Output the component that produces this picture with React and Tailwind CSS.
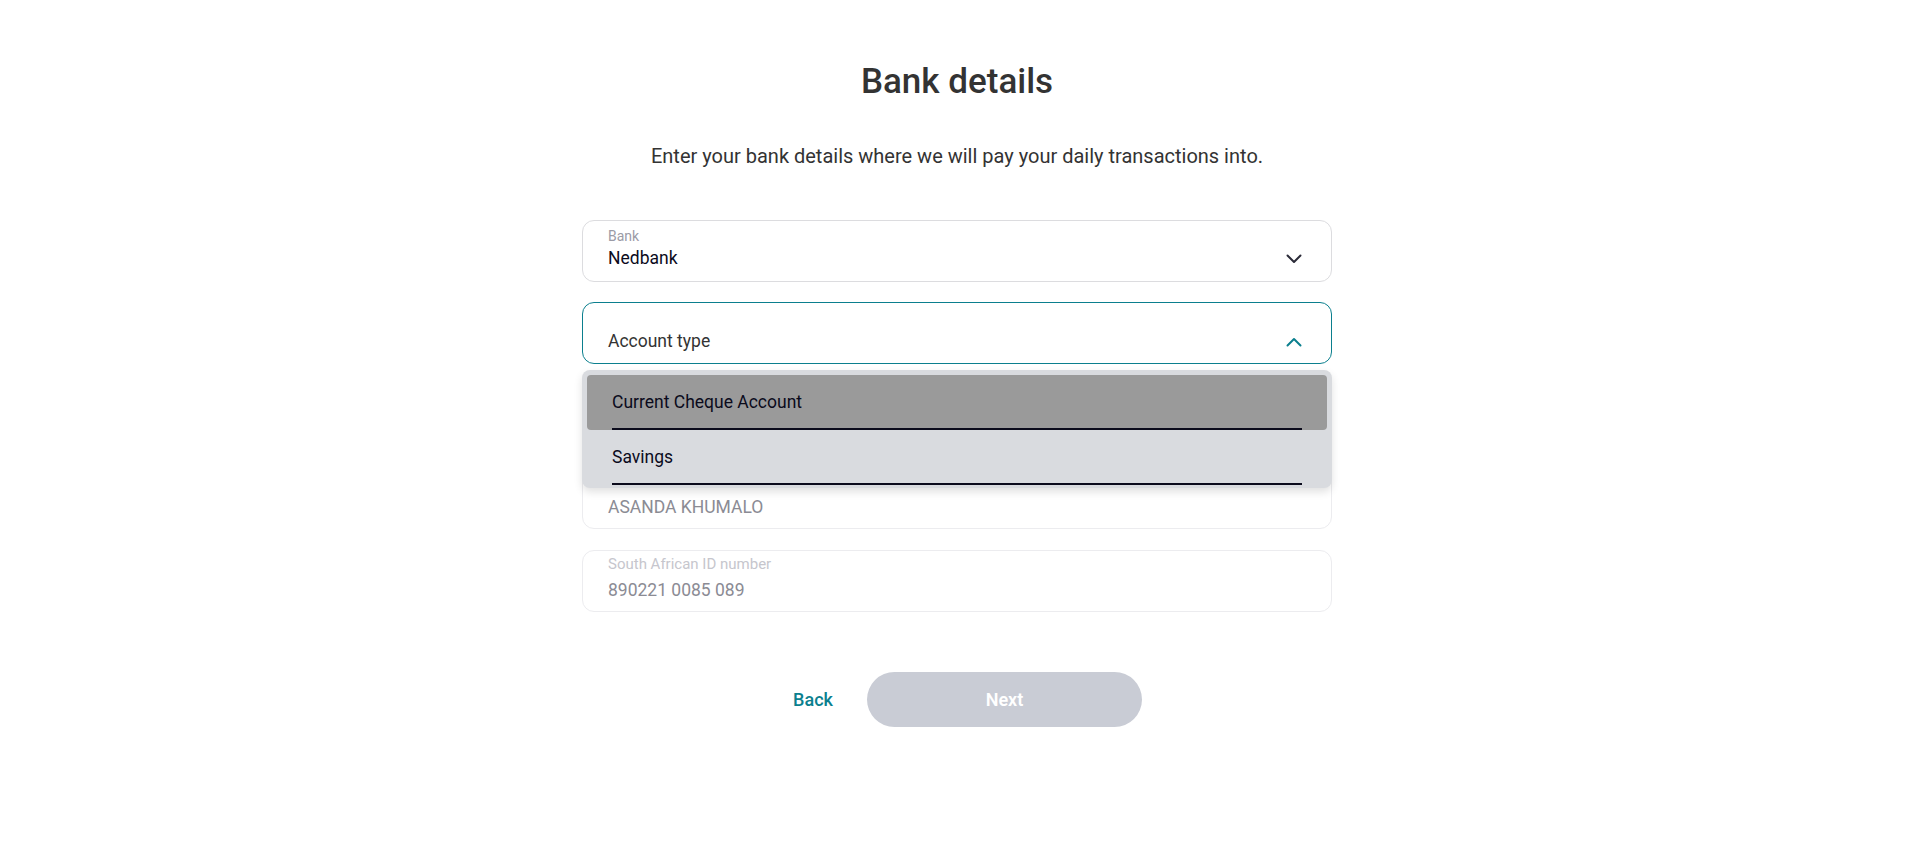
const TEAL = '#0b7f8e'

function Chevron({ up, color }) {
  return (
    <svg width="16" height="10" viewBox="0 0 16 10" fill="none" className="shrink-0">
      <polyline
        points={up ? '1.5,8.5 8,2 14.5,8.5' : '1.5,1.5 8,8 14.5,1.5'}
        stroke={color}
        strokeWidth="2"
        strokeLinecap="round"
        strokeLinejoin="round"
      />
    </svg>
  )
}

function SelectField({ label, value, placeholder, open, children }) {
  return (
    <div className="relative">
      <div
        className={
          'flex h-[62px] items-start justify-between rounded-xl border bg-white pl-[25px] pr-[29px] pt-[7px] ' +
          (open ? 'border-[#0b7f8e]' : 'border-[#dcdcdf]')
        }
      >
        <div className="flex flex-col gap-[3px]">
          <span className="h-[16px] text-[14px] leading-[16px] text-[#9b9ba6]">{label || '\u00a0'}</span>
          {value ? (
            <span className="text-[17.5px] leading-[22px] text-[#0b0b1c]">{value}</span>
          ) : (
            <span className="pt-[1px] text-[17.5px] leading-[22px] text-[#333333]">{placeholder}</span>
          )}
        </div>
        <div className={open ? 'mt-[27px]' : 'mt-[26px]'}>
          <Chevron up={open} color={open ? TEAL : '#2b2b38'} />
        </div>
      </div>
      {children}
    </div>
  )
}

function TextField({ label, value }) {
  return (
    <div className="flex h-[62px] flex-col gap-[7px] rounded-xl border border-[#ececef] bg-white pl-[25px] pt-[5px]">
      <span className="h-[16px] text-[15px] leading-[16px] text-[#c6c6cd]">{label}</span>
      <span className="text-[17.5px] leading-[22px] text-[#8b8b94]">{value}</span>
    </div>
  )
}

function Option({ text, active }) {
  return (
    <div className={'h-[55px] rounded-[4px] ' + (active ? 'bg-[#9a9a9a]' : '')}>
      <div className="mx-[25px] h-full border-b-2 border-[#0b0b1c] pt-[16px] text-[17.5px] leading-[22px] text-[#0b0b1c]">
        {text}
      </div>
    </div>
  )
}

export default function App() {
  return (
    <div
      className="min-h-[847px] w-full bg-white pr-[6px]"
      style={{ fontFamily: 'Roboto, "Liberation Sans", sans-serif' }}
    >
      <div className="mx-auto flex w-[750px] flex-col pt-[60px]">
        <h1 className="text-center text-[35px] font-medium leading-[44px] text-[#333333]">Bank details</h1>
        <p className="mt-[38px] text-center text-[20px] leading-[28px] text-[#333333]">
          Enter your bank details where we will pay your daily transactions into.
        </p>

        <div className="mt-[50px] flex flex-col">
          <SelectField label="Bank" value="Nedbank" />

          <div className="mt-[20px]">
            <SelectField placeholder="Account type" open>
              <div className="absolute left-0 right-0 top-[calc(100%+6px)] z-10 rounded-lg bg-[#d9dbdf] px-[5px] pb-[3px] pt-[5px] shadow-[0_4px_8px_rgba(0,0,0,0.12)]">
                <Option text="Current Cheque Account" active />
                <Option text="Savings" />
              </div>
            </SelectField>
          </div>

          {/* account number and holder labels sit under the open menu */}
          <div className="mt-[20px]">
            <TextField label="" value="" />
          </div>
          <div className="mt-[21px]">
            <TextField label="" value="ASANDA KHUMALO" />
          </div>
          <div className="mt-[21px]">
            <TextField label="South African ID number" value="890221 0085 089" />
          </div>
        </div>

        <div className="mt-[60px] flex items-center pl-[177px]">
          <button className="w-[108px] text-center text-[18px] font-medium leading-[22px] text-[#0b7f8e]">Back</button>
          <button className="h-[55px] w-[275px] rounded-full bg-[#c9ccd5] text-[18px] font-semibold text-white">
            Next
          </button>
        </div>
      </div>
    </div>
  )
}
